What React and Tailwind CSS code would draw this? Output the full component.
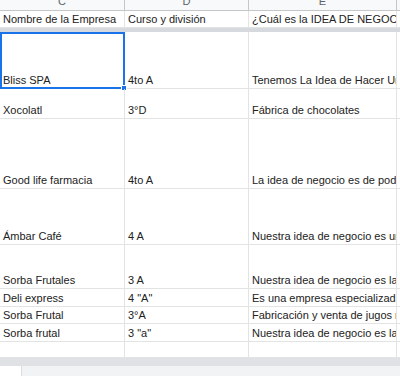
import React from "react";

const rows = [
  { h: "h-[57px]", c: "Bliss SPA", d: "4to A", e: "Tenemos La Idea de Hacer Un emprendimiento", sel: true },
  { h: "h-[30px]", c: "Xocolatl", d: "3°D", e: "Fábrica de chocolates" },
  { h: "h-[70px]", c: "Good life farmacia", d: "4to A", e: "La idea de negocio es de poder vender" },
  { h: "h-[56px]", c: "Ámbar Café", d: "4 A", e: "Nuestra idea de negocio es un café" },
  { h: "h-[44px]", c: "Sorba Frutales", d: "3 A", e: "Nuestra idea de negocio es la venta" },
  { h: "h-[18px]", c: "Deli express", d: "4 \"A\"", e: "Es una empresa especializada en" },
  { h: "h-[17px]", c: "Sorba Frutal", d: "3°A", e: "Fabricación y venta de jugos naturales" },
  { h: "h-[18px]", c: "Sorba frutal", d: "3 \"a\"", e: "Nuestra idea de negocio es la venta" },
  { h: "h-[16px]", c: "", d: "", e: "" },
];

function Cell({ w, children, extra = "" }) {
  return (
    <div
      className={`${w} shrink-0 h-full border-r border-b border-[#e2e3e3] flex items-end overflow-hidden whitespace-nowrap pl-[3px] pb-[1px] leading-[14px] ${extra}`}
    >
      {children}
    </div>
  );
}

export default function App() {
  return (
    <div
      className="w-[400px] h-[376px] overflow-hidden bg-white text-[11px] text-[#222222] flex flex-col"
      style={{ fontFamily: '"Liberation Sans", Arial, sans-serif' }}
    >
      {/* column letters */}
      <div className="h-[11px] shrink-0 flex bg-[#f8f9fa] border-b border-[#c4c7c5] text-[#5f6368]">
        {[
          ["w-[125px]", "C"],
          ["w-[124px]", "D"],
          ["w-[148px]", "E"],
        ].map(([w, l]) => (
          <div key={l} className={`${w} shrink-0 h-full border-r border-[#c4c7c5] overflow-hidden flex justify-center`}>
            <span className="block leading-[11px] -mt-[4px]">{l}</span>
          </div>
        ))}
        <div className="flex-1" />
      </div>

      {/* header row */}
      <div className="h-[17px] shrink-0 flex">
        <Cell w="w-[125px]">Nombre de la Empresa</Cell>
        <Cell w="w-[124px]">Curso y división</Cell>
        <Cell w="w-[148px]">¿Cuál es la IDEA DE NEGOCIO?</Cell>
        <Cell w="flex-1" extra="border-r-0" />
      </div>

      {/* freeze bar */}
      <div className="h-[4px] shrink-0 bg-[#d6dadf]" />

      {rows.map((r, i) => (
        <div key={i} className={`${r.h} shrink-0 flex`}>
          <div className="relative w-[125px] shrink-0 h-full">
            <Cell w="w-full">{r.c}</Cell>
            {r.sel && (
              <>
                <div className="absolute left-0 top-0 w-[125px] h-[57px] border-2 border-[#1a73e8] pointer-events-none" />
                <div className="absolute left-[121px] top-[53px] w-[6px] h-[6px] bg-[#1a73e8] border border-white" />
              </>
            )}
          </div>
          <Cell w="w-[124px]">{r.d}</Cell>
          <Cell w="w-[148px]">{r.e}</Cell>
          <Cell w="flex-1" extra="border-r-0" />
        </div>
      ))}

      {/* scrollbar band */}
      <div className="h-[8px] shrink-0 bg-[#dfe1e4]" />

      {/* bottom sheet bar */}
      <div className="flex-1 flex bg-[#f1f3f4]">
        <div className="w-[22px] h-full bg-white border-r border-[#dadce0]" />
      </div>
    </div>
  );
}
